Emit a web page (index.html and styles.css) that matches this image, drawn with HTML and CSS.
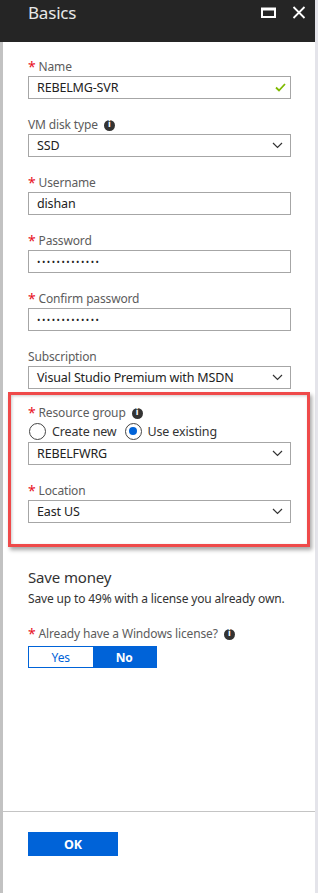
FILE: index.html
```html
<!DOCTYPE html>
<html lang="en">
<head>
  <meta charset="UTF-8">
  <meta name="viewport" content="width=device-width, initial-scale=1.0">
  <title>Basics</title>
  <link rel="stylesheet" href="styles.css">
</head>
<body>

  <div class="blade">
    <div class="blade-header">
      <span class="blade-title">Basics</span>
      <div class="blade-controls">
        <svg class="icon-max" width="15" height="11" viewBox="0 0 15 11"><rect x="1" y="1.5" width="13" height="8.5" fill="none" stroke="#fff" stroke-width="2"/><rect x="1" y="1" width="13" height="2.5" fill="#fff"/></svg>
        <svg class="icon-close" width="14" height="13" viewBox="0 0 14 13"><path d="M1.5 1 L12.5 12 M12.5 1 L1.5 12" stroke="#fff" stroke-width="1.8"/></svg>
      </div>
    </div>

    <div class="blade-body">
      <div class="form">

        <div class="field">
          <div class="label"><span class="req">*</span> Name</div>
          <div class="input">
            <span>REBELMG-SVR</span>
            <svg class="check" width="11" height="9" viewBox="0 0 11 9"><path d="M1 4.5 L4 7.5 L10 1" fill="none" stroke="#7fba00" stroke-width="1.8"/></svg>
          </div>
        </div>

        <div class="field">
          <div class="label">VM disk type <span class="info">i</span></div>
          <div class="input select">
            <span>SSD</span>
            <svg class="chevron" width="11" height="7" viewBox="0 0 11 7"><path d="M1 1 L5.5 5.5 L10 1" fill="none" stroke="#333" stroke-width="1.2"/></svg>
          </div>
        </div>

        <div class="field">
          <div class="label"><span class="req">*</span> Username</div>
          <div class="input"><span>dishan</span></div>
        </div>

        <div class="field">
          <div class="label"><span class="req">*</span> Password</div>
          <div class="input"><span class="dots">•••••••••••••</span></div>
        </div>

        <div class="field">
          <div class="label"><span class="req">*</span> Confirm password</div>
          <div class="input"><span class="dots">•••••••••••••</span></div>
        </div>

        <div class="field tight">
          <div class="label">Subscription</div>
          <div class="input select">
            <span>Visual Studio Premium with MSDN</span>
            <svg class="chevron" width="11" height="7" viewBox="0 0 11 7"><path d="M1 1 L5.5 5.5 L10 1" fill="none" stroke="#333" stroke-width="1.2"/></svg>
          </div>
        </div>

        <div class="highlight">
          <div class="field">
            <div class="label"><span class="req">*</span> Resource group <span class="info">i</span></div>
            <div class="radios">
              <label class="radio"><span class="radio-dot"></span>Create new</label>
              <label class="radio checked"><span class="radio-dot"></span>Use existing</label>
            </div>
            <div class="input select">
              <span>REBELFWRG</span>
              <svg class="chevron" width="11" height="7" viewBox="0 0 11 7"><path d="M1 1 L5.5 5.5 L10 1" fill="none" stroke="#333" stroke-width="1.2"/></svg>
            </div>
          </div>

          <div class="field last">
            <div class="label"><span class="req">*</span> Location</div>
            <div class="input select">
              <span>East US</span>
              <svg class="chevron" width="11" height="7" viewBox="0 0 11 7"><path d="M1 1 L5.5 5.5 L10 1" fill="none" stroke="#333" stroke-width="1.2"/></svg>
            </div>
          </div>
        </div>

        <div class="section">
          <h2 class="section-title">Save money</h2>
          <p class="section-text">Save up to 49% with a license you already own.</p>
          <div class="label"><span class="req">*</span> Already have a Windows license? <span class="info">i</span></div>
          <div class="toggle">
            <span class="toggle-opt">Yes</span>
            <span class="toggle-opt on">No</span>
          </div>
        </div>

      </div>

      <div class="blade-footer">
        <button class="btn-ok">OK</button>
      </div>
    </div>
  </div>

</body>
</html>
```

FILE: styles.css
```css
body {
  margin: 0;
  background-color: #ffffff;
  font-family: "Noto Sans", "Open Sans", sans-serif;
  font-size: 12px;
  letter-spacing: -0.15px;
  color: #222222;
}

.blade {
  width: 315px;
  height: 893px;
  border-right: 3px solid #e4e4ea;
  display: flex;
  flex-direction: column;
}

.blade-header {
  height: 42px;
  flex-shrink: 0;
  background-color: #252525;
  display: flex;
  align-items: center;
  justify-content: space-between;
  padding: 0 9px 0 28px;
}

.blade-title {
  color: #e8e8e8;
  font-size: 17px;
  letter-spacing: -0.2px;
  margin-top: -17px;
}

.blade-controls {
  display: flex;
  align-items: center;
  gap: 16px;
  margin-top: -17px;
}

.blade-body {
  flex: 1;
  display: flex;
  flex-direction: column;
  border-left: 3px solid #c2c2c2;
}

.form {
  flex: 1;
  padding: 16px 24px 0 25px;
}

.field {
  margin-bottom: 17px;
}

.field.tight {
  margin-bottom: 3px;
}

.field.last {
  margin-bottom: 0;
}

.label {
  height: 18px;
  line-height: 18px;
  color: #5c5c5c;
  display: flex;
  align-items: center;
  white-space: pre;
}

.req {
  color: #e81123;
  font-size: 14px;
}

.info {
  display: inline-flex;
  align-items: center;
  justify-content: center;
  width: 11px;
  height: 11px;
  border-radius: 50%;
  background-color: #333333;
  color: #ffffff;
  font-size: 8px;
  font-weight: bold;
  font-family: "DejaVu Sans", sans-serif;
  margin-left: 3px;
}

.input {
  height: 21px;
  border: 1px solid #a6a6a6;
  display: flex;
  align-items: center;
  justify-content: space-between;
  padding: 0 4px 0 8px;
  color: #222222;
  font-size: 12.5px;
}

.chevron {
  margin-right: 3px;
}

.dots {
  font-size: 9px;
  letter-spacing: 1.5px;
}

.highlight {
  padding: 9px 16px 21px 17px;
  margin: 0 -19px 0 -20px;
  border: 3px solid #ef4a4a;
  box-shadow: 2px 3px 4px rgba(0, 0, 0, 0.35), inset 1px 1px 3px rgba(0, 0, 0, 0.2);
}

.radios {
  display: flex;
  gap: 8px;
  height: 18px;
  align-items: center;
  margin: 0 0 2px 1px;
}

.radio {
  display: flex;
  align-items: center;
  gap: 6px;
  color: #333333;
  font-size: 12.5px;
}

.radio-dot {
  width: 15px;
  height: 15px;
  border: 1px solid #444444;
  border-radius: 50%;
  position: relative;
}

.radio.checked .radio-dot::after {
  content: "";
  position: absolute;
  left: 3.5px;
  top: 3.5px;
  width: 8px;
  height: 8px;
  border-radius: 50%;
  background-color: #0063d8;
}

.section {
  padding-top: 19px;
}

.section-title {
  margin: 0;
  font-size: 15px;
  font-weight: normal;
  color: #333333;
  line-height: 22px;
}

.section-text {
  margin: 2px 0 18px;
  line-height: 17px;
  color: #333333;
}

.toggle {
  display: flex;
  width: 127px;
  height: 20px;
  border: 1px solid #0063d8;
  margin-top: 3px;
}

.toggle-opt {
  flex: 1;
  display: flex;
  align-items: center;
  justify-content: center;
  color: #0063d8;
}

.toggle-opt.on {
  background-color: #0063d8;
  color: #ffffff;
  font-weight: bold;
}

.blade-footer {
  height: 61px;
  border-top: 1px solid #c4c4c4;
  padding: 20px 0 0 25px;
}

.btn-ok {
  width: 90px;
  height: 24px;
  border: none;
  background-color: #0063d8;
  color: #ffffff;
  font-family: "Noto Sans", sans-serif;
  font-size: 12.5px;
  font-weight: bold;
}
```
